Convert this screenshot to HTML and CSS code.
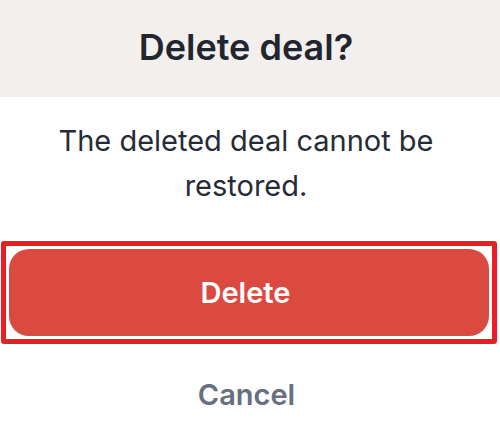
FILE: index.html
```html
<!DOCTYPE html>
<html>
<head>
    <title>Delete deal?</title>
    <meta charset="utf-8">
    <link rel="stylesheet" href="styles.css">
</head>
<body>
    <div class="dialog">
        <h1 class="dialog-title">Delete deal?</h1>
        <p class="dialog-text">The deleted deal cannot be restored.</p>
        <div class="focus-ring">
            <button class="btn btn-danger">Delete</button>
        </div>
        <button class="btn btn-link">Cancel</button>
    </div>
</body>
</html>
```

FILE: styles.css
```css
body {
    margin: 0;
    background-color: #fff;
    font-family: Inter, "Noto Sans", sans-serif;
}
.dialog {
    width: 500px;
    height: 441px;
    overflow: hidden;
}
.dialog-title {
    margin: 0;
    padding-right: 8px;
    height: 97px;
    line-height: 95px;
    background-color: #f2efec;
    text-align: center;
    font-size: 36px;
    font-weight: 600;
    color: #1f2630;
}
.dialog-text {
    margin: 21px 58px 0 50px;
    text-align: center;
    font-size: 29px;
    line-height: 45px;
    color: #262c37;
}
.focus-ring {
    margin: 33px 3px 0 1px;
    padding: 3px;
    border: 5px solid #ee1c25;
    border-radius: 3px;
}
.btn {
    display: block;
    width: 100%;
    border: 0;
    font-family: Inter, "Noto Sans", sans-serif;
    font-weight: 600;
    font-size: 29px;
    cursor: pointer;
}
.btn-danger {
    height: 87px;
    padding: 0 7px 0 0;
    border-radius: 20px;
    background-color: #da4a40;
    color: #fff;
}
.btn-link {
    margin-top: 30px;
    height: 40px;
    padding: 0 7px 0 0;
    background: none;
    color: #667080;
}
```
